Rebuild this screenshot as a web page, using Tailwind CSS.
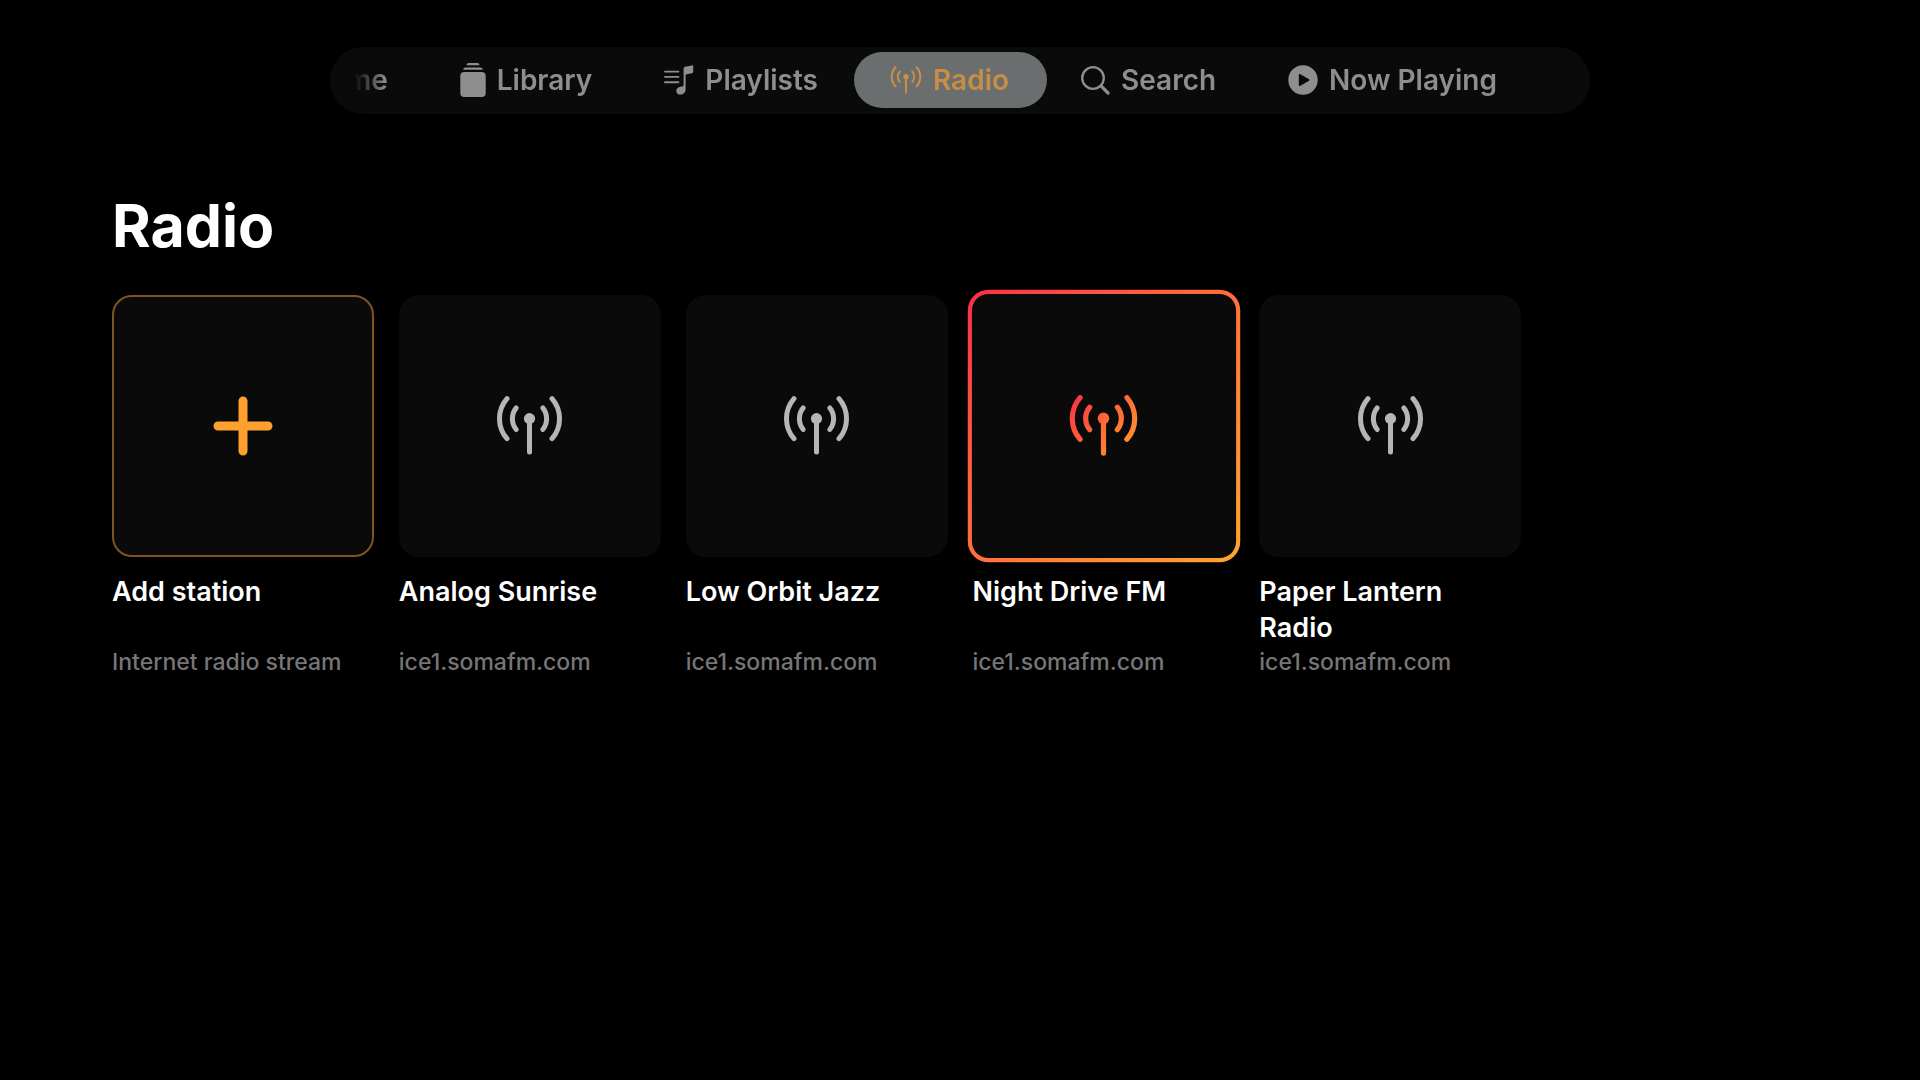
<!DOCTYPE html>
<html lang="en">
<head>
  <meta charset="UTF-8">
  <title>Radio</title>
  <meta name="viewport" content="width=device-width, initial-scale=1.0">
  <script src="https://cdn.jsdelivr.net/npm/@tailwindcss/browser@4"></script>
</head>
<body class="bg-black text-white min-h-screen font-['Inter',sans-serif]">
  <!-- Shared icons -->
  <svg class="hidden" aria-hidden="true">
    <symbol id="antenna" viewBox="17 17 66 59">
      <g fill="none" stroke-linecap="round">
        <path d="M27.5 19.7A30.4 30.4 0 0 0 27.5 59.7M72.5 19.7A30.4 30.4 0 0 1 72.5 59.7"/>
        <path d="M36.7 28.9A17.2 17.2 0 0 0 36.7 50.5M63.3 28.9A17.2 17.2 0 0 1 63.3 50.5"/>
        <path d="M50 40V73"/>
      </g>
      <circle cx="50" cy="39.6" r="5.6" stroke="none"/>
    </symbol>
  </svg>

  <header class="pt-[47px] px-28">
    <nav class="w-full max-w-[1260px] h-[67px] pb-px mx-auto bg-[#0a0a0a] rounded-full overflow-hidden">
      <div class="h-full flex items-center justify-end pr-[57px] text-[28px] font-semibold text-[#8e8e8e] whitespace-nowrap mask-[linear-gradient(to_right,transparent_24px,black_56px)]">
        <a href="#home" class="shrink-0 h-14 px-9 flex items-center gap-[11px] rounded-full">
          <svg class="w-8 h-7" viewBox="0 0 32 28" fill="currentColor"><path d="M16 1 1 14h4v13h8v-8h6v8h8V14h4z"/></svg>
          <span>Home</span>
        </a>
        <a href="#library" class="shrink-0 h-14 px-9 flex items-center gap-[11px] rounded-full">
          <svg class="w-[26px] h-[34px]" viewBox="0 0 26 34" fill="currentColor">
            <path d="M6.5 2.3C6.7.8 7.3 0 8.6 0h8.8c1.3 0 1.9.8 2.1 2.3zM3.2 6.8C3.5 5.1 4.2 4.4 5.6 4.4h14.8c1.4 0 2.1.7 2.4 2.4z"/>
            <rect x=".3" y="8.9" width="25.4" height="25" rx="4"/>
          </svg>
          <span>Library</span>
        </a>
        <a href="#playlists" class="shrink-0 h-14 px-9 flex items-center gap-[11px] rounded-full">
          <svg class="w-[30px] h-[30px]" viewBox="0 0 30 30" fill="currentColor">
            <path d="M1 6.6h13.4M1 11.9h13.4M1 17.2h13.4" fill="none" stroke="currentColor" stroke-width="1.9" stroke-linecap="round"/>
            <path d="M19.6 3.7c0-1.2.5-1.8 1.6-2L27.8.4c.9-.2 1.4.2 1.4 1.1v5.2c0 .8-.4 1.3-1.2 1.5l-5.3 1.1c-.8.2-1.1.5-1.1 1.3v13.7c0 3.2-2.3 5.3-5.1 5.3-2.5 0-4.2-1.5-4.2-3.7 0-2.3 1.6-3.6 4.2-4.1l1.7-.4c1-.2 1.4-.6 1.4-1.6z"/>
          </svg>
          <span>Playlists</span>
        </a>
        <a href="#radio" aria-current="page" class="shrink-0 h-14 -mr-0.5 pl-9 pr-[38px] flex items-center gap-[11px] rounded-full bg-[#6b6e6e] text-[#c88e45]">
          <svg class="w-8 h-7 fill-current stroke-current" stroke-width="4.4"><use href="#antenna"/></svg>
          <span>Radio</span>
        </a>
        <a href="#search" class="shrink-0 h-14 px-9 flex items-center gap-[11px] rounded-full">
          <svg class="w-[29px] h-[29px]" viewBox="0 0 29 29" fill="none" stroke="currentColor" stroke-linecap="round">
            <circle cx="12" cy="12" r="10.8" stroke-width="2.3"/>
            <path d="M20.2 20.2 27 27" stroke-width="3.2"/>
          </svg>
          <span>Search</span>
        </a>
        <a href="#now-playing" class="shrink-0 h-14 px-9 flex items-center gap-[11px] rounded-full">
          <svg class="w-[30px] h-[30px]" viewBox="0 0 30 30">
            <circle cx="15" cy="15" r="14.7" fill="currentColor"/>
            <path d="M11.6 9.8 20.6 15l-9 5.2z" fill="#0a0a0a" stroke="#0a0a0a" stroke-width="1.6" stroke-linejoin="round"/>
          </svg>
          <span>Now Playing</span>
        </a>
      </div>
    </nav>
  </header>

  <main class="px-28 pt-20">
    <h1 class="text-[59px] leading-[64px] font-bold">Radio</h1>
    <ul class="mt-[37px] grid grid-cols-6 gap-[25px]">
      <li>
        <button type="button" class="w-full block text-left">
          <span class="aspect-square flex items-center justify-center rounded-[20px] bg-[#0a0a0a] border-2 border-[#7d5520]">
            <svg class="w-[60px] h-[60px]" viewBox="0 0 60 60" fill="none" stroke="#ff9f2d" stroke-width="9" stroke-linecap="round"><path d="M30 5v50M5 30h50"/></svg>
          </span>
          <span class="block mt-[17px] h-[72px] text-[27px] leading-9 font-semibold">Add station</span>
          <span class="block text-[23px] leading-8 font-medium text-[#767676]">Internet radio stream</span>
        </button>
      </li>
      <li>
        <button type="button" class="w-full block text-left">
          <span class="aspect-square flex items-center justify-center rounded-[20px] bg-[#0a0a0a]">
            <svg class="w-[67px] h-[59px] fill-[#b6b6b6] stroke-[#b6b6b6]" stroke-width="5"><use href="#antenna"/></svg>
          </span>
          <span class="block mt-[17px] h-[72px] text-[27px] leading-9 font-semibold">Analog Sunrise</span>
          <span class="block text-[23px] leading-8 font-medium text-[#767676]">ice1.somafm.com</span>
        </button>
      </li>
      <li>
        <button type="button" class="w-full block text-left">
          <span class="aspect-square flex items-center justify-center rounded-[20px] bg-[#0a0a0a]">
            <svg class="w-[67px] h-[59px] fill-[#b6b6b6] stroke-[#b6b6b6]" stroke-width="5"><use href="#antenna"/></svg>
          </span>
          <span class="block mt-[17px] h-[72px] text-[27px] leading-9 font-semibold">Low Orbit Jazz</span>
          <span class="block text-[23px] leading-8 font-medium text-[#767676]">ice1.somafm.com</span>
        </button>
      </li>
      <!-- Focused station -->
      <li>
        <button type="button" class="w-full block text-left">
          <span class="aspect-square flex p-1 scale-104 rounded-[20px] bg-linear-to-br from-[#fa2d48] via-[#ff6f3c] to-[#fda52e]">
            <span class="flex-1 flex items-center justify-center rounded-2xl bg-[#0a0a0a]">
              <svg class="w-[67px] h-[59px]" viewBox="17 17 66 59" fill="none" stroke="url(#glow)" stroke-width="5" stroke-linecap="round">
                <defs>
                  <linearGradient id="glow" gradientUnits="userSpaceOnUse" x1="17" y1="17" x2="83" y2="76">
                    <stop offset="0" stop-color="#fa2d48"/>
                    <stop offset=".5" stop-color="#ff6a38"/>
                    <stop offset="1" stop-color="#fda52e"/>
                  </linearGradient>
                </defs>
                <path d="M27.5 19.7A30.4 30.4 0 0 0 27.5 59.7M72.5 19.7A30.4 30.4 0 0 1 72.5 59.7"/>
                <path d="M36.7 28.9A17.2 17.2 0 0 0 36.7 50.5M63.3 28.9A17.2 17.2 0 0 1 63.3 50.5"/>
                <path d="M50 40V73"/>
                <circle cx="50" cy="39.6" r="5.6" fill="url(#glow)" stroke="none"/>
              </svg>
            </span>
          </span>
          <span class="block mt-[17px] h-[72px] text-[27px] leading-9 font-semibold">Night Drive FM</span>
          <span class="block text-[23px] leading-8 font-medium text-[#767676]">ice1.somafm.com</span>
        </button>
      </li>
      <li>
        <button type="button" class="w-full block text-left">
          <span class="aspect-square flex items-center justify-center rounded-[20px] bg-[#0a0a0a]">
            <svg class="w-[67px] h-[59px] fill-[#b6b6b6] stroke-[#b6b6b6]" stroke-width="5"><use href="#antenna"/></svg>
          </span>
          <span class="block mt-[17px] h-[72px] text-[27px] leading-9 font-semibold">Paper Lantern Radio</span>
          <span class="block text-[23px] leading-8 font-medium text-[#767676]">ice1.somafm.com</span>
        </button>
      </li>
    </ul>
  </main>
</body>
</html>
